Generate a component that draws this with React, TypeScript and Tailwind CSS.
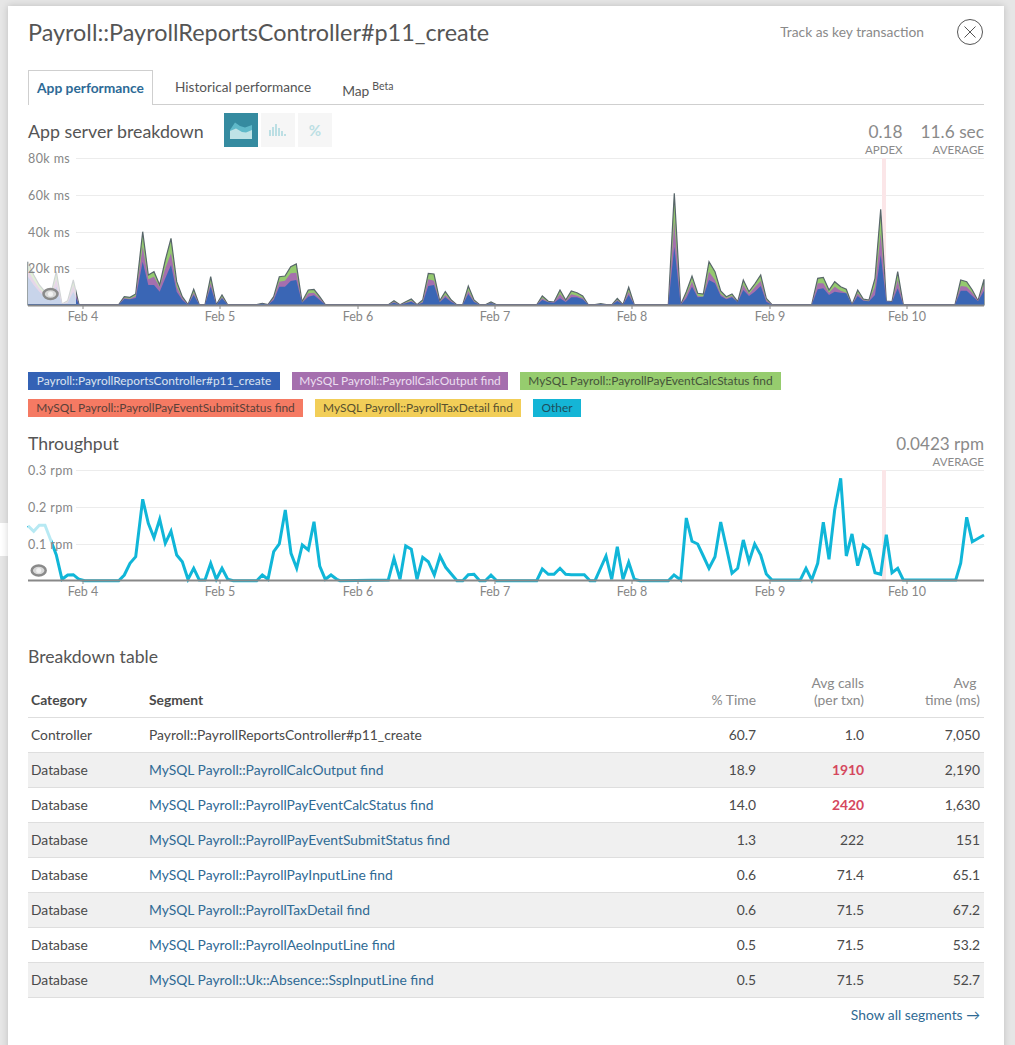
import React from "react";

const font = { fontFamily: "Lato, 'Noto Sans', sans-serif" };

type P = [number, number, number, number];
// stacked chart: [x, green top, purple top, blue top] in 3x crop coordinates
const seg = (ox: number, pts: P[]): [number, number, number, number][] =>
  pts.map(([x, g, p, b]) => [ox + x / 3, 170 + g / 3, 170 + p / 3, 170 + b / 3]);
const z = (x: number): P => [x, 404, 404, 404];
const stack = [
  ...seg(0, [
    [84, 275, 300, 320], [101, 315, 330, 345], [118, 345, 355, 365], [135, 365, 372, 380], [152, 375, 380, 385],
    [169, 305, 325, 350], [186, 402, 402, 402], [203, 392, 395, 398], [220, 330, 345, 365], z(237), z(356),
    [373, 380, 384, 387], [390, 382, 386, 388], [407, 372, 378, 384], [428, 185, 230, 275], [445, 315, 328, 345],
    [462, 305, 320, 345], [479, 345, 352, 365], [496, 270, 295, 325], [513, 205, 250, 285], [530, 335, 350, 365],
    [547, 380, 385, 390], z(564), [581, 358, 368, 375], z(598), z(615), [632, 320, 338, 350], z(649),
    [666, 375, 382, 385], z(683), z(770), [787, 400, 401, 401], z(804), [821, 380, 385, 390], [838, 320, 335, 350],
    [855, 318, 332, 350], [872, 290, 310, 333], [889, 282, 308, 330], [906, 395, 398, 398], [925, 360, 370, 380],
    [942, 358, 368, 376], [959, 380, 385, 390], z(976),
  ]),
  ...seg(340, [
    z(145), [162, 392, 396, 398], z(180), [197, 395, 398, 400], [214, 387, 392, 395], z(231), [248, 390, 395, 398],
    [265, 310, 328, 348], [282, 312, 332, 345], [299, 392, 395, 397], [316, 365, 375, 382], [334, 390, 393, 396],
    z(350), z(368), [385, 348, 362, 372], [402, 390, 394, 396], z(419), z(436), [453, 396, 399, 400], z(470), z(590),
    [607, 378, 385, 390], [625, 394, 396, 397], [642, 396, 397, 398], [660, 360, 372, 385], [677, 390, 393, 396],
    [694, 363, 373, 382], [711, 368, 377, 382], [728, 378, 384, 388], z(745), z(765), [782, 401, 402, 402], z(799),
    z(816), [832, 385, 390, 393], z(849), [866, 352, 365, 375], z(883), z(985), [1003, 70, 155, 230],
  ]),
  ...seg(675, [
    z(17), [34, 365, 375, 385], [51, 318, 335, 350], [68, 370, 378, 382], [85, 372, 380, 380], [102, 275, 305, 330],
    [120, 305, 330, 340], [137, 363, 372, 378], [154, 380, 385, 388], [171, 372, 378, 382], [188, 395, 397, 397],
    [205, 330, 345, 360], [222, 365, 372, 378], [239, 342, 352, 365], [257, 315, 333, 348], [274, 385, 390, 395], z(291),
    z(410), [428, 325, 340, 358], [445, 322, 340, 355], [462, 360, 368, 375], [479, 335, 350, 365], [497, 350, 362, 368],
    [514, 358, 368, 370], z(531), [548, 360, 370, 378], [565, 387, 390, 392], [582, 390, 392, 394], [600, 325, 350, 375],
    [617, 118, 190, 255], [634, 393, 394, 394], [651, 395, 396, 396], [668, 305, 330, 355], z(685), z(840),
    [857, 330, 348, 362], [875, 335, 350, 362], [892, 360, 368, 378], [909, 392, 393, 394], [927, 328, 345, 362],
  ]),
];
const area = (i: number) =>
  `28,305 ${stack.map((p) => `${p[0].toFixed(1)},${p[i].toFixed(1)}`).join(" ")} 984,305`;

const line = (ox: number, oy: number, pts: number[][]) =>
  pts.map(([x, y]) => `${(ox + x / 3).toFixed(1)},${(oy + y / 3).toFixed(1)}`).join(" ");

const throughput = [
  line(0, 460, [
    [84, 197], [101, 214], [118, 196], [135, 196], [152, 240], [169, 285], [186, 358], [203, 345], [220, 344], [237, 358],
    [254, 362], [356, 362], [373, 345], [390, 310], [407, 290], [428, 118], [445, 190], [462, 233], [479, 178], [496, 250],
    [513, 214], [530, 285], [547, 305], [564, 358], [581, 325], [598, 360], [615, 360], [632, 310], [649, 358], [666, 325],
    [683, 358], [700, 362], [770, 362], [787, 345], [804, 358], [821, 275], [838, 252], [856, 150], [873, 280], [890, 325],
    [907, 255], [925, 270], [942, 185], [959, 318], [976, 358], [993, 345], [1010, 358],
  ]),
  line(340, 460, [
    [0, 362], [145, 360], [162, 295], [180, 358], [197, 258], [214, 268], [231, 358], [248, 292], [265, 305], [283, 345],
    [300, 288], [317, 322], [334, 342], [351, 362], [368, 362], [385, 344], [402, 343], [419, 362], [436, 362], [453, 345],
    [470, 362], [590, 362], [607, 327], [625, 343], [642, 343], [660, 325], [677, 343], [694, 344], [733, 344], [750, 362],
    [765, 362], [798, 288], [815, 358], [832, 260], [849, 358], [866, 307], [883, 358], [900, 362], [985, 362], [1002, 345],
  ]),
  line(675, 430, [
    [17, 450], [34, 264], [51, 334], [68, 342], [85, 378], [102, 415], [120, 380], [137, 276], [154, 352], [171, 430],
    [188, 415], [205, 330], [222, 395], [239, 342], [257, 375], [274, 432], [291, 450], [376, 450], [393, 415], [410, 450],
    [428, 400], [445, 277], [462, 388], [479, 240], [497, 145], [514, 378], [531, 312], [548, 407], [565, 345], [582, 358],
    [600, 428], [617, 433], [634, 314], [651, 428], [668, 415], [685, 450], [702, 450], [842, 450], [857, 400], [875, 262],
    [892, 335], [927, 315],
  ]),
].join(" ");

const days: [string, number][] = [
  ["Feb 4", 83], ["Feb 5", 220], ["Feb 6", 358], ["Feb 7", 495], ["Feb 8", 632], ["Feb 9", 770], ["Feb 10", 907],
];

function Eye({ x, y }: { x: number; y: number }) {
  return (
    <g>
      <ellipse cx={x} cy={y} rx="7" ry="5" fill="#d8d8d8" stroke="#8a8a8a" strokeWidth="2.5" />
      <circle cx={x} cy={y} r="2.5" fill="#f2f2f2" />
    </g>
  );
}

function Axis({ base, dy }: { base: number; dy: number }) {
  return (
    <g>
      <line x1="28" x2="984" y1={base + 0.5} y2={base + 0.5} stroke="#888" strokeWidth="2" />
      {days.map(([d, x]) => (
        <g key={d}>
          <line x1={x} x2={x} y1={base} y2={base + 4} stroke="#888" />
          <text x={x} y={base + dy} textAnchor="middle" fontSize="12.5" fill="#868686">{d}</text>
        </g>
      ))}
    </g>
  );
}

function Grid({ rows }: { rows: [string, number][] }) {
  return (
    <g>
      {rows.map(([, y]) => (
        <line key={y} x1="76" x2="984" y1={y + 0.5} y2={y + 0.5} stroke="#ececec" />
      ))}
    </g>
  );
}

function Labels({ rows }: { rows: [string, number][] }) {
  return (
    <g>
      {rows.map(([t, y]) => (
        <text key={t} x="28" y={y + 4.5} fontSize="12.5" fill="#868686" letterSpacing="0.4">{t}</text>
      ))}
    </g>
  );
}

const rowsA: [string, number][] = [["80k ms", 158], ["60k ms", 195], ["40k ms", 232], ["20k ms", 268]];
const rowsB: [string, number][] = [["0.3 rpm", 470], ["0.2 rpm", 507], ["0.1 rpm", 544]];

const legend1 = [
  ["Payroll::PayrollReportsController#p11_create", "bg-[#3462b5] text-[#dbe2f0]", "w-[252px]"],
  ["MySQL Payroll::PayrollCalcOutput find", "bg-[#a56fae] text-[#ecdff0]", "w-[216px]"],
  ["MySQL Payroll::PayrollPayEventCalcStatus find", "bg-[#96cc6e] text-[#45543a]", "w-[261px]"],
];
const legend2 = [
  ["MySQL Payroll::PayrollPayEventSubmitStatus find", "bg-[#f57a63] text-[#5a4038]", "w-[275px]"],
  ["MySQL Payroll::PayrollTaxDetail find", "bg-[#f2ce58] text-[#57502f]", "w-[206px]"],
  ["Other", "bg-[#14b5d6] text-[#1e4f5c]", "w-[48px]"],
];

const tableRows: [string, string, string, string, string, boolean][] = [
  ["Controller", "Payroll::PayrollReportsController#p11_create", "60.7", "1.0", "7,050", false],
  ["Database", "MySQL Payroll::PayrollCalcOutput find", "18.9", "1910", "2,190", true],
  ["Database", "MySQL Payroll::PayrollPayEventCalcStatus find", "14.0", "2420", "1,630", true],
  ["Database", "MySQL Payroll::PayrollPayEventSubmitStatus find", "1.3", "222", "151", false],
  ["Database", "MySQL Payroll::PayrollPayInputLine find", "0.6", "71.4", "65.1", false],
  ["Database", "MySQL Payroll::PayrollTaxDetail find", "0.6", "71.5", "67.2", false],
  ["Database", "MySQL Payroll::PayrollAeoInputLine find", "0.5", "71.5", "53.2", false],
  ["Database", "MySQL Payroll::Uk::Absence::SspInputLine find", "0.5", "71.5", "52.7", false],
];

function Chip({ c }: { c: string[] }) {
  return (
    <span className={`flex h-[18px] items-center justify-center whitespace-nowrap text-[11.9px] leading-[18px] ${c[1]} ${c[2]}`}>
      {c[0]}
    </span>
  );
}

export default function App() {
  return (
    <div className="relative h-[1045px] overflow-hidden bg-[#e6e6e6] pl-[8px] pr-[11px] pt-[6px]" style={font}>
      <div className="absolute left-0 top-[523px] h-[33px] w-[12px] bg-white" />
      <div className="relative h-[1060px] bg-white px-[20px] pt-[12px] text-[#4a4a4a] shadow-[0_0_7px_rgba(0,0,0,0.18)]">
        <div className="flex h-[28px] items-center">
          <h1 className="flex-1 text-[23.4px] font-normal leading-[28px] text-[#555]">Payroll::PayrollReportsController#p11_create</h1>
          <span className="mr-[33px] text-[13.8px] text-[#8a8a8a]">Track as key transaction</span>
          <svg width="26" height="26" viewBox="0 0 26 26" className="mr-px" fill="none" stroke="#555">
            <circle cx="13" cy="13" r="12.5" />
            <path d="M7.5 7.5l11 11M18.5 7.5l-11 11" />
          </svg>
        </div>

        <div className="mt-[24px] flex h-[35px] border-b border-[#cfcfcf] text-[13.8px]">
          <div className="-mb-px flex h-[35px] w-[125px] items-center justify-center border border-b-0 border-[#cfcfcf] bg-white pt-px font-bold text-[#2d6a96]">App performance</div>
          <div className="ml-[22px] flex items-center pt-px text-[13.6px] text-[#555]">Historical performance</div>
          <div className="ml-[31px] flex items-center pt-[9px] text-[#555]">
            Map<sup className="ml-[3px] text-[10.5px]">Beta</sup>
          </div>
        </div>

        <div className="mt-[8px] flex h-[44px] items-start">
          <h2 className="mt-[5px] w-[196px] text-[17.8px] font-normal leading-[26px] text-[#555]">App server breakdown</h2>
          <div className="flex gap-[3px]">
            <div className="flex h-[34px] w-[34px] items-center justify-center bg-[#358ba0]">
              <svg width="22" height="18" viewBox="0 0 22 18">
                <path d="M0 9L5 1.5 10 5 15 6.5 22 4V14H0Z" fill="#5fb9c9" />
                <path d="M0 10L6 7.5 12 11 16 11.5 22 9V18H0Z" fill="#bfe3e6" />
              </svg>
            </div>
            <div className="flex h-[34px] w-[34px] items-center justify-center bg-[#f6f6f6]">
              <svg width="18" height="12" viewBox="0 0 18 12" fill="#bcdfe4">
                <rect x="0" y="6" width="2" height="6" />
                <rect x="3" y="3" width="2" height="9" />
                <rect x="6" y="0" width="2" height="12" />
                <rect x="9" y="4" width="2" height="8" />
                <rect x="12" y="7" width="2" height="5" />
                <rect x="15" y="10" width="2" height="2" />
              </svg>
            </div>
            <div className="flex h-[34px] w-[34px] items-center justify-center bg-[#f6f6f6] text-[15px] font-bold text-[#bcdfe4]">%</div>
          </div>
          <div className="ml-auto flex gap-[18px] text-right">
            <div>
              <div className="mt-[6px] text-[17.3px] leading-[26px] text-[#8a8a8a]">0.18</div>
              <div className="text-[11.5px] leading-[10px] text-[#8a8a8a]">APDEX</div>
            </div>
            <div>
              <div className="mt-[6px] text-[17.3px] leading-[26px] text-[#8a8a8a]">11.6 sec</div>
              <div className="text-[11.5px] leading-[10px] text-[#8a8a8a]">AVERAGE</div>
            </div>
          </div>
        </div>

        <svg width="956" height="168" viewBox="28 157 956 168" className="block overflow-visible" style={font}>
          <Grid rows={rowsA} />
          <rect x="882" y="158" width="4" height="147" fill="#fbe6e8" />
          <polygon points={area(1)} fill="#94c96f" stroke="#58666a" strokeWidth="1.2" />
          <polygon points={area(2)} fill="#a56fae" />
          <polygon points={area(3)} fill="#3a66b5" />
          <rect x="28" y="158" width="48" height="148" fill="#fff" opacity="0.72" />
          <Labels rows={rowsA} />
          <line x1="28" x2="80" y1="304.5" y2="304.5" stroke="#3a66b5" />
          <Axis base={305} dy={16} />
          <Eye x={50.5} y={294} />
        </svg>

        <div className="mt-[47px] flex flex-col gap-[9px]">
          <div className="flex gap-[12px]">{legend1.map((c) => <Chip key={c[0]} c={c} />)}</div>
          <div className="flex gap-[12px]">{legend2.map((c) => <Chip key={c[0]} c={c} />)}</div>
        </div>

        <div className="mt-[14px] flex h-[39px] justify-between">
          <h2 className="text-[17.6px] font-normal leading-[26px] text-[#555]">Throughput</h2>
          <div className="text-right text-[#8a8a8a]">
            <div className="text-[17.1px] leading-[26px]">0.0423 rpm</div>
            <div className="text-[11.5px] leading-[10px]">AVERAGE</div>
          </div>
        </div>

        <svg width="956" height="130" viewBox="28 470 956 130" className="block overflow-visible" style={font}>
          <Grid rows={rowsB} />
          <rect x="882" y="470" width="4" height="111" fill="#fbe6e8" />
          <polyline points={throughput} fill="none" stroke="#10b6d8" strokeWidth="3" strokeLinejoin="miter" />
          <rect x="28" y="470" width="24" height="110" fill="#fff" opacity="0.7" />
          <Labels rows={rowsB} />
          <Axis base={580} dy={16} />
          <Eye x={38.7} y={570.5} />
        </svg>

        <h2 className="mt-[46px] text-[17.6px] font-normal leading-[22px] text-[#555]">Breakdown table</h2>

        <table className="mt-[2px] w-[956px] table-fixed border-collapse text-[13.85px]">
          <colgroup>
            <col className="w-[117px]" />
            <col className="w-[400px]" />
            <col className="w-[214px]" />
            <col className="w-[108px]" />
            <col className="w-[117px]" />
          </colgroup>
          <thead>
            <tr className="h-[47px] border-b border-[#dedede] align-bottom leading-[17px]">
              <th className="pb-[9px] pl-[3px] text-left font-bold text-[#4a4a4a]">Category</th>
              <th className="pb-[9px] pl-[4px] text-left font-bold text-[#4a4a4a]">Segment</th>
              <th className="pb-[9px] pr-[3px] text-right font-normal text-[#8a8a8a]">% Time</th>
              <th className="pb-[9px] pr-[3px] text-right font-normal text-[#8a8a8a]">Avg calls<br />(per txn)</th>
              <th className="pb-[9px] pr-[4px] text-right font-normal text-[#8a8a8a]">Avg&nbsp;<br />time (ms)</th>
            </tr>
          </thead>
          <tbody>
            {tableRows.map((r, i) => (
              <tr key={r[1]} className={`h-[35px] border-b border-[#dedede] ${i % 2 === 1 ? "bg-[#f0f0f0]" : "bg-white"}`}>
                <td className="pl-[3px] pt-[2px]">{r[0]}</td>
                <td className={`pl-[4px] pt-[2px] ${i === 0 ? "" : "text-[#2f6a94]"}`}>{r[1]}</td>
                <td className="pr-[3px] pt-[2px] text-right">{r[2]}</td>
                <td className={`pr-[3px] pt-[2px] text-right ${r[5] ? "font-bold text-[#d5485e]" : ""}`}>{r[3]}</td>
                <td className="pr-[4px] pt-[2px] text-right">{r[4]}</td>
              </tr>
            ))}
          </tbody>
        </table>
        <div className="mt-[7px] pr-[4px] text-right text-[13.85px] leading-[20px] text-[#2f6a94]">Show all segments →</div>
      </div>
    </div>
  );
}
